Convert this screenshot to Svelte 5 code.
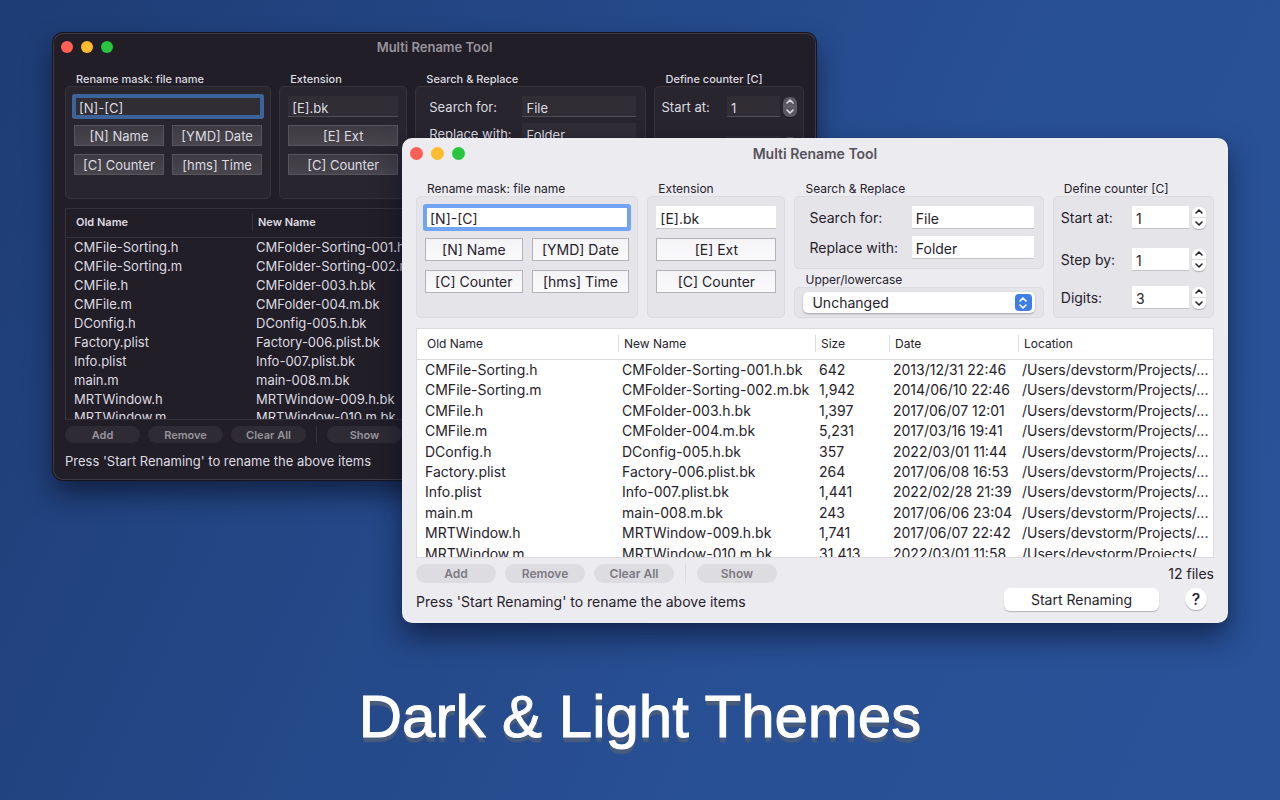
<script>
  const themes = ['dark', 'light'];

  const files = [
    { old: 'CMFile-Sorting.h', renamed: 'CMFolder-Sorting-001.h.bk', size: '642', date: '2013/12/31 22:46' },
    { old: 'CMFile-Sorting.m', renamed: 'CMFolder-Sorting-002.m.bk', size: '1,942', date: '2014/06/10 22:46' },
    { old: 'CMFile.h', renamed: 'CMFolder-003.h.bk', size: '1,397', date: '2017/06/07 12:01' },
    { old: 'CMFile.m', renamed: 'CMFolder-004.m.bk', size: '5,231', date: '2017/03/16 19:41' },
    { old: 'DConfig.h', renamed: 'DConfig-005.h.bk', size: '357', date: '2022/03/01 11:44' },
    { old: 'Factory.plist', renamed: 'Factory-006.plist.bk', size: '264', date: '2017/06/08 16:53' },
    { old: 'Info.plist', renamed: 'Info-007.plist.bk', size: '1,441', date: '2022/02/28 21:39' },
    { old: 'main.m', renamed: 'main-008.m.bk', size: '243', date: '2017/06/06 23:04' },
    { old: 'MRTWindow.h', renamed: 'MRTWindow-009.h.bk', size: '1,741', date: '2017/06/07 22:42' },
    { old: 'MRTWindow.m', renamed: 'MRTWindow-010.m.bk', size: '31,413', date: '2022/03/01 11:58' }
  ];

  const columns = ['Old Name', 'New Name', 'Size', 'Date', 'Location'];
  const location = '/Users/devstorm/Projects/...';

  let mask = $state('[N]-[C]');
  let extension = $state('[E].bk');
  let search = $state('File');
  let replace = $state('Folder');
  let counter = $state([
    { id: 'start', label: 'Start at:', value: 1 },
    { id: 'step', label: 'Step by:', value: 1 },
    { id: 'digits', label: 'Digits:', value: 3 }
  ]);
</script>

{#snippet chevron(up)}
  <svg viewBox="0 0 8 5" width="8" height="5" aria-hidden="true">
    <path d={up ? 'M1 4 L4 1 L7 4' : 'M1 1 L4 4 L7 1'} />
  </svg>
{/snippet}

{#snippet appWindow(theme)}
  <section class="window {theme}">
    <header class="titlebar">
      <div class="lights">
        <button class="light-dot close" aria-label="Close"></button>
        <button class="light-dot minimize" aria-label="Minimize"></button>
        <button class="light-dot zoom" aria-label="Zoom"></button>
      </div>
      <h2>Multi Rename Tool</h2>
    </header>

    <div class="content">
      <div class="groups">
        <div class="group">
          <label class="group-title" for="{theme}-mask">Rename mask: file name</label>
          <div class="box pair">
            <input class="field focused" id="{theme}-mask" type="text" bind:value={mask} />
            <button class="token" onclick={() => (mask += '[N]')}>[N] Name</button>
            <button class="token" onclick={() => (mask += '[YMD]')}>[YMD] Date</button>
            <button class="token" onclick={() => (mask += '[C]')}>[C] Counter</button>
            <button class="token" onclick={() => (mask += '[hms]')}>[hms] Time</button>
          </div>
        </div>

        <div class="group">
          <label class="group-title" for="{theme}-ext">Extension</label>
          <div class="box single">
            <input class="field" id="{theme}-ext" type="text" bind:value={extension} />
            <button class="token" onclick={() => (extension += '[E]')}>[E] Ext</button>
            <button class="token" onclick={() => (extension += '[C]')}>[C] Counter</button>
          </div>
        </div>

        <div class="group">
          <span class="group-title">Search &amp; Replace</span>
          <div class="box search">
            <label for="{theme}-search">Search for:</label>
            <input class="field" id="{theme}-search" type="text" bind:value={search} />
            <label for="{theme}-replace">Replace with:</label>
            <input class="field" id="{theme}-replace" type="text" bind:value={replace} />
          </div>
          <label class="group-title case-title" for="{theme}-case">Upper/lowercase</label>
          <div class="box case">
            <div class="popup">
              <select id="{theme}-case">
                <option>Unchanged</option>
                <option>Uppercase</option>
                <option>Lowercase</option>
              </select>
              <span class="popup-arrow">
                {@render chevron(true)}
                {@render chevron(false)}
              </span>
            </div>
          </div>
        </div>

        <div class="group">
          <span class="group-title">Define counter [C]</span>
          <div class="box counter">
            {#each counter as row}
              <div class="counter-row">
                <label for="{theme}-{row.id}">{row.label}</label>
                <input class="field" id="{theme}-{row.id}" type="text" bind:value={row.value} />
                <div class="stepper">
                  <button aria-label="Increase" onclick={() => row.value++}>{@render chevron(true)}</button>
                  <button aria-label="Decrease" onclick={() => row.value--}>{@render chevron(false)}</button>
                </div>
              </div>
            {/each}
          </div>
        </div>
      </div>

      <div class="list">
        <table>
          <colgroup>
            <col class="col-old" />
            <col class="col-new" />
            <col class="col-size" />
            <col class="col-date" />
            <col />
          </colgroup>
          <thead>
            <tr>
              {#each columns as column}
                <th><span>{column}</span></th>
              {/each}
            </tr>
          </thead>
          <tbody>
            {#each files as file}
              <tr>
                <td>{file.old}</td>
                <td>{file.renamed}</td>
                <td>{file.size}</td>
                <td>{file.date}</td>
                <td>{location}</td>
              </tr>
            {/each}
          </tbody>
        </table>
      </div>

      <div class="actions">
        <button class="pill" disabled>Add</button>
        <button class="pill" disabled>Remove</button>
        <button class="pill" disabled>Clear All</button>
        <span class="divider"></span>
        <button class="pill" disabled>Show</button>
        <span class="count">12 files</span>
      </div>

      <footer class="status">
        <span>Press 'Start Renaming' to rename the above items</span>
        <button class="start">Start Renaming</button>
        <button class="help" aria-label="Help">?</button>
      </footer>
    </div>
  </section>
{/snippet}

<main class="desktop">
  {#each themes as theme}
    {@render appWindow(theme)}
  {/each}
  <h1>Dark &amp; Light Themes</h1>
</main>

<style>
  :global(body) {
    margin: 0;
  }

  .desktop {
    position: relative;
    display: flex;
    flex-direction: column;
    justify-content: flex-end;
    align-items: center;
    box-sizing: border-box;
    min-height: 100vh;
    padding-bottom: 48px;
    overflow: hidden;
    background: linear-gradient(115deg, #1e3c75 0%, #234684 30%, #285095 65%, #295298 100%);
    font-family: Inter, 'Liberation Sans', sans-serif;
  }

  h1 {
    margin: 0;
    color: #fff;
    font-family: 'Liberation Sans', Arial, sans-serif;
    font-size: 60px;
    font-weight: 400;
    line-height: 70px;
    text-shadow: 0 5px 1px #4a5c7c;
    -webkit-text-stroke: 1px #fff;
  }

  /* windows */
  .window {
    position: absolute;
    border-radius: 10px;
    color: var(--text);
    background: var(--bg);
    font-size: var(--font);
  }

  .dark {
    --text: #dddbe0;
    --muted: #97949b;
    --bg: #221e28;
    --box: #28252e;
    --box-line: #35323b;
    --field: #302d35;
    --field-line: #504d55;
    --ring: #3d649a;
    --token: linear-gradient(#3d3a42, #48454d);
    --token-line: #57545c;
    --list: #221e28;
    --pill: #2e2b34;
    --control: #5b5860;
    --mark: #dddbe0;
    --font: 13px;
    --small: 11px;
    --small-weight: 500;
    --head-weight: 600;
    --bar: 27px;
    --dot: 12px;
    --title: 13px;
    --top: 12px;
    --bottom: 11px;
    --pad: 12px;
    --label: 14px;
    --row: 21px;
    --gap: 8px;
    --tight: 6px;
    --box-height: 113px;
    --search-indent: 13px;
    --search-field: 114px;
    --counter-pad: 6px;
    --counter-field: 53px;
    --list-gap: 9px;
    --list-height: 212px;
    --head: 28px;
    --table: 218px;
    --col-old: 186px;
    --col-new: 182px;
    --col-size: 69px;
    --col-date: 119px;
    --pill-width: 75px;
    --pill-height: 17px;
    --status-gap: 6px;
    --status: 20px;
    top: 33px;
    left: 53px;
    right: 464px;
    box-shadow: 0 0 0 1px #17141c, inset 0 0 0 1px #3e3b44, 0 14px 26px rgba(8, 12, 32, 0.6);
  }

  .light {
    --text: #26222c;
    --muted: #7d7a82;
    --bg: #ecebf0;
    --box: #e5e4e9;
    --box-line: #dcdbe0;
    --field: #fff;
    --field-line: #c4c3c8;
    --ring: #71a4f2;
    --token: linear-gradient(#f4f3f6, #fafafb);
    --token-line: #b3b2b8;
    --list: #fff;
    --pill: #dddce1;
    --control: #fff;
    --mark: #26222c;
    --font: 14px;
    --small: 12px;
    --small-weight: 400;
    --head-weight: 400;
    --bar: 30px;
    --dot: 13px;
    --title: 14px;
    --top: 13px;
    --bottom: 13px;
    --pad: 14px;
    --label: 15px;
    --row: 23px;
    --gap: 9px;
    --tight: 7px;
    --box-height: 122px;
    --search-indent: 14px;
    --search-field: 122px;
    --counter-pad: 7px;
    --counter-field: 57px;
    --list-gap: 10px;
    --list-height: 230px;
    --head: 30px;
    --table: 235px;
    --col-old: 201px;
    --col-new: 197px;
    --col-size: 74px;
    --col-date: 129px;
    --pill-width: 80px;
    --pill-height: 19px;
    --status-gap: 5px;
    --status: 22px;
    top: 138px;
    left: 402px;
    right: 52px;
    box-shadow: 0 0 1px rgba(0, 0, 0, 0.6), 0 14px 28px rgba(8, 14, 40, 0.6);
  }

  .window button,
  .window input,
  .window select {
    box-sizing: border-box;
    color: inherit;
    font-family: inherit;
    font-size: inherit;
  }

  .titlebar {
    display: grid;
    grid-template-columns: 1fr auto 1fr;
    align-items: center;
    height: var(--bar);
  }

  .titlebar h2 {
    margin: 0;
    color: var(--muted);
    font-size: var(--title);
    font-weight: 600;
  }

  .light .titlebar h2 {
    color: #56535b;
  }

  .lights {
    display: flex;
    gap: 8px;
    padding-left: 8px;
  }

  .light-dot {
    width: var(--dot);
    height: var(--dot);
    padding: 0;
    border: none;
    border-radius: 50%;
  }

  .close {
    background: #ff5e57;
  }

  .minimize {
    background: #fdbb2d;
  }

  .zoom {
    background: #28c63f;
  }

  .content {
    padding: var(--top) var(--pad) var(--bottom);
  }

  /* option groups */
  .groups {
    display: grid;
    grid-template-columns: 222fr 138fr 249fr 161fr;
    gap: var(--gap);
  }

  .group {
    display: flex;
    flex-direction: column;
    min-width: 0;
    height: calc(var(--box-height) + var(--label));
  }

  .group-title {
    padding-left: 11px;
    font-size: var(--small);
    font-weight: var(--small-weight);
    line-height: var(--label);
    white-space: nowrap;
  }

  .case-title {
    margin-top: 3px;
  }

  .box {
    display: grid;
    align-content: start;
    flex: 1;
    box-sizing: border-box;
    padding: 9px 8px;
    border: 1px solid var(--box-line);
    border-radius: 5px;
    background: var(--box);
    white-space: nowrap;
  }

  .pair {
    grid-template-columns: 1fr 1fr;
    gap: var(--gap);
  }

  .pair .field {
    grid-column: span 2;
  }

  .single {
    gap: var(--gap);
  }

  .search {
    flex: none;
    grid-template-columns: 1fr var(--search-field);
    align-items: center;
    gap: var(--tight) 0;
    padding-left: var(--search-indent);
    padding-right: 9px;
  }

  .case {
    padding: 4px 8px;
  }

  .counter {
    gap: 15px;
    padding-bottom: 7px;
    padding-left: var(--counter-pad);
    padding-right: var(--counter-pad);
  }

  .field {
    width: 100%;
    min-width: 0;
    height: var(--row);
    padding: 3px 4px 0;
    border: none;
    border-bottom: 1px solid var(--field-line);
    border-radius: 0;
    background: var(--field);
    outline: none;
  }

  .focused {
    padding: 2px 3px 0;
    border: 2px solid var(--ring);
    box-shadow: 0 0 0 2px var(--ring);
    border-radius: 1px;
  }

  .token {
    height: var(--row);
    padding: 0;
    border: 1px solid var(--token-line);
    background: var(--token);
  }

  .counter-row {
    display: grid;
    grid-template-columns: 1fr var(--counter-field) 14px;
    align-items: center;
    column-gap: 3px;
  }

  .counter-row:first-child {
    margin-bottom: 4px;
  }

  .stepper {
    display: flex;
    flex-direction: column;
    height: calc(var(--row) - 1px);
    border-radius: 6px;
    background: var(--control);
    box-shadow: 0 1px 1px rgba(0, 0, 0, 0.25);
  }

  .stepper button {
    display: flex;
    flex: 1;
    align-items: center;
    justify-content: center;
    padding: 0;
    border: none;
    background: none;
  }

  .stepper button + button {
    border-top: 1px solid rgba(128, 128, 128, 0.25);
  }

  svg path {
    fill: none;
    stroke: var(--mark);
    stroke-width: 1.6;
    stroke-linecap: round;
    stroke-linejoin: round;
  }

  .popup {
    position: relative;
  }

  .popup select {
    display: block;
    width: 100%;
    height: 21px;
    padding: 0 24px 0 9px;
    border: none;
    border-radius: 5px;
    appearance: none;
    background: var(--control);
    box-shadow: 0 1px 2px rgba(0, 0, 0, 0.3);
  }

  .popup-arrow {
    position: absolute;
    top: 2px;
    right: 3px;
    display: flex;
    flex-direction: column;
    align-items: center;
    justify-content: center;
    gap: 2px;
    width: 17px;
    height: 17px;
    border-radius: 4px;
    background: #3f7fe4;
    pointer-events: none;
  }

  .popup-arrow path {
    stroke: #fff;
  }

  /* file list */
  .list {
    box-sizing: border-box;
    height: var(--list-height);
    margin-top: var(--list-gap);
    border: 1px solid var(--box-line);
    background: var(--list);
    overflow: hidden;
  }

  table {
    width: 100%;
    height: var(--table);
    border-collapse: collapse;
    table-layout: fixed;
  }

  .col-old {
    width: var(--col-old);
  }

  .col-new {
    width: var(--col-new);
  }

  .col-size {
    width: var(--col-size);
  }

  .col-date {
    width: var(--col-date);
  }

  th {
    box-sizing: border-box;
    height: var(--head);
    padding: 0;
    border-bottom: 1px solid var(--box-line);
    font-size: var(--small);
    font-weight: var(--head-weight);
    text-align: left;
  }

  th span {
    display: block;
    padding-left: 5px;
    border-left: 1px solid var(--box-line);
    line-height: 17px;
  }

  th:first-child span {
    padding-left: 9px;
    border-left-color: transparent;
  }

  td {
    padding: 0 0 0 4px;
    line-height: 18px;
    white-space: nowrap;
    overflow: hidden;
  }

  td:first-child {
    padding-left: 8px;
  }

  /* bottom bar */
  .actions {
    display: flex;
    align-items: center;
    gap: var(--gap);
    margin-top: 6px;
    height: var(--pill-height);
  }

  .pill {
    width: var(--pill-width);
    height: var(--pill-height);
    padding: 0;
    border: none;
    border-radius: 10px;
    background: var(--pill);
  }

  .window .pill {
    color: var(--muted);
    font-size: var(--small);
    font-weight: 600;
  }

  .divider {
    width: 1px;
    height: var(--pill-height);
    margin: 0 2px;
    background: var(--box-line);
  }

  .count {
    margin-left: auto;
  }

  .status {
    display: flex;
    align-items: center;
    margin-top: var(--status-gap);
    height: var(--status);
  }

  .status span {
    flex: 1;
    padding-top: 4px;
    white-space: nowrap;
  }

  .start {
    width: 155px;
    height: 23px;
    padding: 0;
    border: none;
    border-radius: 6px;
    background: var(--control);
    box-shadow: 0 1px 1px rgba(0, 0, 0, 0.25);
  }

  .help {
    width: 22px;
    height: 22px;
    margin: 0 7px 0 26px;
    padding: 0;
    border: none;
    border-radius: 50%;
    background: var(--control);
    box-shadow: 0 1px 1px rgba(0, 0, 0, 0.25);
  }

  .window .help {
    font-size: 16px;
    font-weight: 500;
  }
</style>
